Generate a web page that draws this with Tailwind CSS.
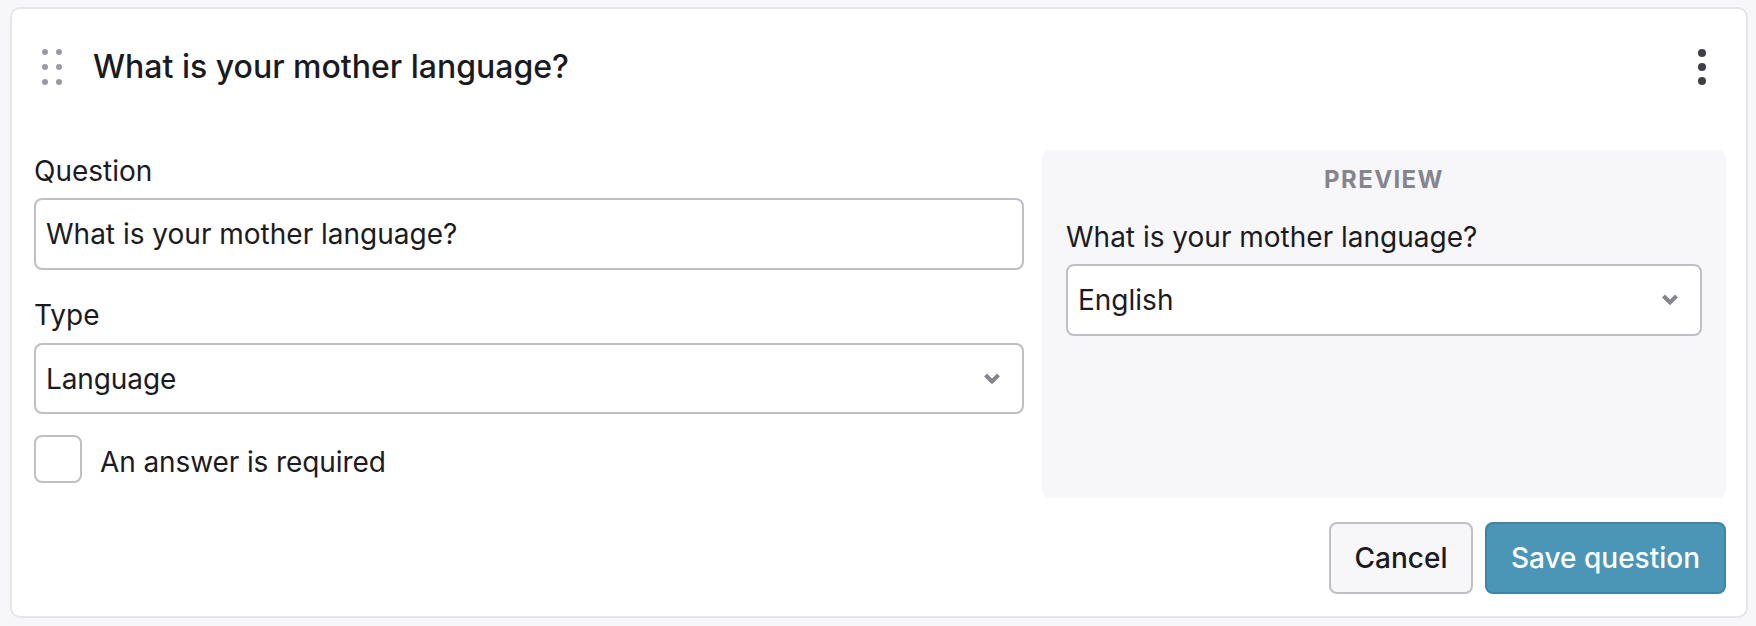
<!DOCTYPE html>
<html>
<head>
  <meta charset="UTF-8">
  <title>Question editor</title>
  <script src="https://cdn.jsdelivr.net/npm/@tailwindcss/browser@4"></script>
</head>
<body class="bg-[#f7f7f9] h-screen overflow-hidden font-['Inter',sans-serif] text-[#1b1b1f]">
  <div class="ml-[10px] mt-[7px] w-[1738px] h-[611px] bg-white border-2 border-[#e6e6ea] rounded-[10px] pl-[22px] pr-[20px] flex flex-col">

    <div class="h-[141px] flex items-start">
      <div class="flex items-center h-[115px] w-full">
        <svg class="w-[26px] h-[40px] ml-[7px] mr-[26px]" viewBox="0 0 26 40" fill="#9a9aa4">
          <circle cx="4" cy="5" r="3"/><circle cx="18" cy="5" r="3"/>
          <circle cx="4" cy="20" r="3"/><circle cx="18" cy="20" r="3"/>
          <circle cx="4" cy="35" r="3"/><circle cx="18" cy="35" r="3"/>
        </svg>
        <h1 class="text-[32px] font-medium leading-none flex-1">What is your mother language?</h1>
        <svg class="w-[10px] h-[40px] mr-[19px]" viewBox="0 0 10 40" fill="#3f3f46">
          <circle cx="5" cy="6" r="4"/><circle cx="5" cy="20" r="4"/><circle cx="5" cy="34" r="4"/>
        </svg>
      </div>
    </div>

    <div class="grid grid-cols-[990px_684px] gap-[18px]">
      <div>
        <label for="inputQuestion" class="block text-[28px] leading-[34px] mt-[4px] mb-[10px]">Question</label>
        <input id="inputQuestion" type="text" value="What is your mother language?" class="block w-full h-[72px] px-[10px] text-[28px] border-2 border-[#bfbfc5] rounded-[8px] bg-white">

        <label class="block text-[28px] leading-[34px] mt-[28px] mb-[11px]">Type</label>
        <div class="flex items-center justify-between h-[71px] px-[10px] text-[28px] tracking-[-0.1px] border-2 border-[#bfbfc5] rounded-[8px] bg-white">
          <span>Language</span>
          <svg class="w-[16px] h-[12px] mr-[12px]" viewBox="0 0 16 12" fill="none" stroke="#85858f" stroke-width="4"><path d="M1.5 2 8 8.5 14.5 2"/></svg>
        </div>

        <div class="flex items-center mt-[21px]">
          <span class="w-[48px] h-[48px] border-2 border-[#bfbfc5] rounded-[8px] bg-white"></span>
          <span class="ml-[18px] pt-[6px] text-[28px] leading-[34px] tracking-[-0.1px]">An answer is required</span>
        </div>
      </div>

      <div class="bg-[#f7f7f9] rounded-[8px] h-[348px] px-[24px]">
        <p class="text-center text-[24px] font-bold tracking-[1.4px] text-[#85858f] leading-none pt-[18px]">PREVIEW</p>
        <p class="text-[28px] leading-[34px] mt-[28px] mb-[10px]">What is your mother language?</p>
        <div class="flex items-center justify-between h-[72px] px-[10px] text-[28px] border-2 border-[#bfbfc5] rounded-[8px] bg-white">
          <span>English</span>
          <svg class="w-[16px] h-[12px] mr-[12px]" viewBox="0 0 16 12" fill="none" stroke="#85858f" stroke-width="4"><path d="M1.5 2 8 8.5 14.5 2"/></svg>
        </div>
      </div>
    </div>

    <div class="flex justify-end gap-[12px] mt-[24px]">
      <button type="button" class="w-[144px] h-[72px] text-[28px] font-medium border-2 border-[#bfbfc5] rounded-[8px] bg-[#f7f7f9]">Cancel</button>
      <button type="button" class="w-[241px] h-[72px] text-[28px] font-medium text-white border-2 border-[#3d85a5] rounded-[8px] bg-[#4b95b6]">Save question</button>
    </div>
  </div>
</body>
</html>
